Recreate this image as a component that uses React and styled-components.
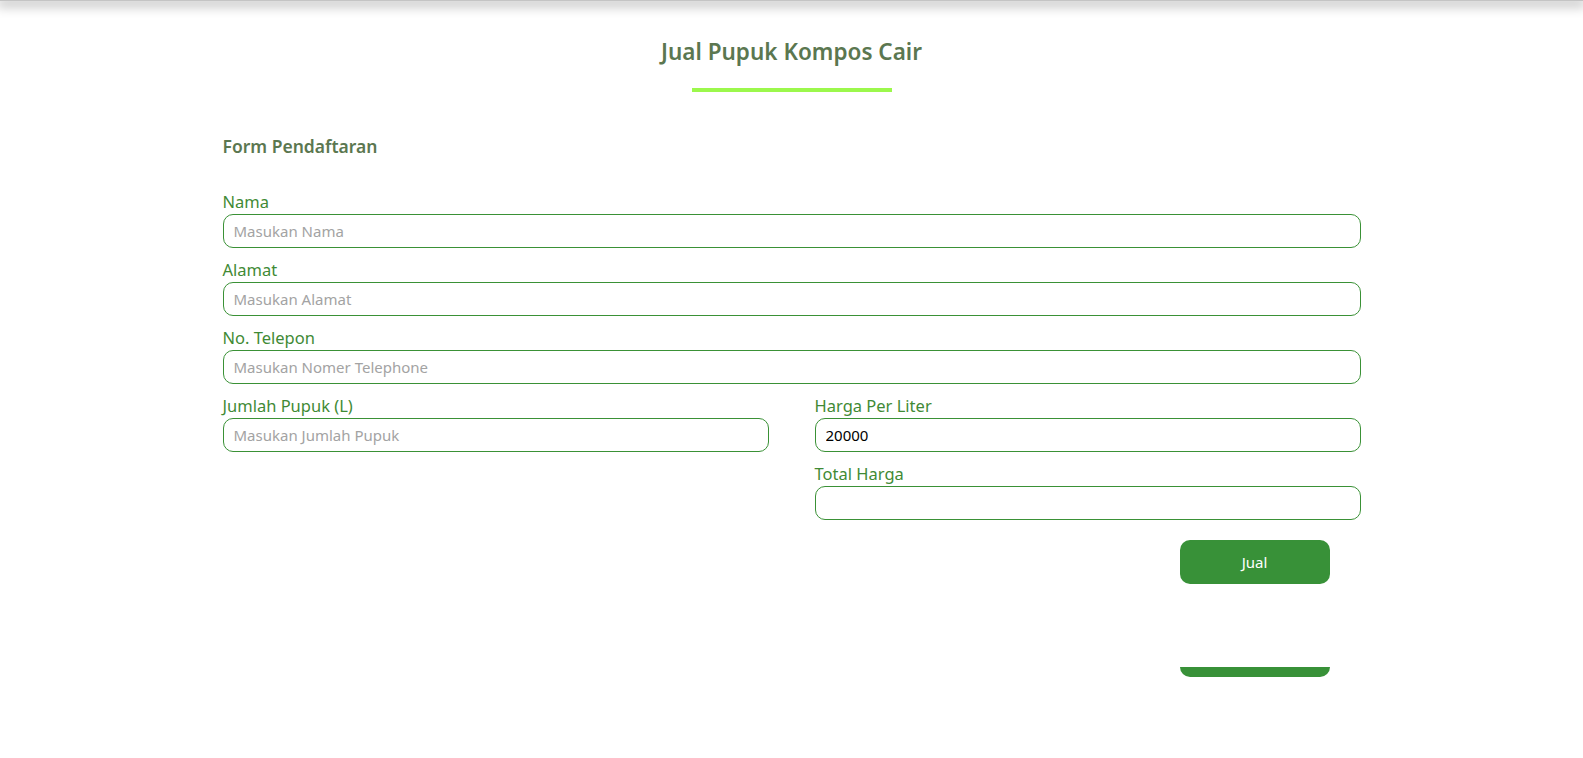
import React from 'react';
import styled, { createGlobalStyle } from 'styled-components';

const GlobalStyle = createGlobalStyle`
  body {
    margin: 0;
    background: #ffffff;
    font-family: "Noto Sans", "Open Sans", sans-serif;
  }
  * { box-sizing: border-box; }
`;

const TopShade = styled.div`
  height: 1px;
  background: #c4c4c4;
  box-shadow: 0 2px 12px 3px rgba(0, 0, 0, 0.3);
`;

const Page = styled.main`
  width: 1138px;
  margin: 0 auto;
  padding-top: 34px;
`;

const Title = styled.h1`
  margin: 0;
  text-align: center;
  font-size: 22.5px;
  line-height: 34px;
  font-weight: 600;
  color: #5b7750;
`;

const Underline = styled.div`
  width: 200px;
  height: 4px;
  margin: 19px auto 0;
  background: #9cf84c;
`;

const FormTitle = styled.h2`
  margin: 40px 0 0;
  font-size: 17.5px;
  line-height: 28px;
  font-weight: 600;
  color: #5b7750;
`;

const Form = styled.form`
  margin-top: 30px;
`;

const Field = styled.div`
  margin-bottom: 10px;
`;

const Label = styled.label`
  display: block;
  font-size: 16.5px;
  line-height: 24px;
  color: #3f8a35;
`;

const Input = styled.input`
  display: block;
  width: 100%;
  height: 34px;
  border: 1px solid #3a9136;
  border-radius: 10px;
  padding: 0 10px;
  font-family: inherit;
  font-size: 15px;
  color: #000;
  outline: none;
  &::placeholder {
    color: #a3a3a3;
  }
`;

const Columns = styled.div`
  display: grid;
  grid-template-columns: 1fr 1fr;
  column-gap: 46px;
`;

const Actions = styled.div`
  display: flex;
  flex-direction: column;
  align-items: flex-end;
  padding-right: 31px;
  margin-top: 10px;
`;

const Button = styled.button`
  width: 150px;
  height: 44px;
  border: none;
  border-radius: 10px;
  background: #389138;
  color: #ffffff;
  font-family: inherit;
  font-size: 15px;
  cursor: pointer;
`;

const ClippedButton = styled.div`
  width: 150px;
  height: 10px;
  margin-top: 83px;
  background: #389138;
  border-radius: 0 0 10px 10px;
`;

const fields = [
  { label: 'Nama', placeholder: 'Masukan Nama' },
  { label: 'Alamat', placeholder: 'Masukan Alamat' },
  { label: 'No. Telepon', placeholder: 'Masukan Nomer Telephone' },
];

export default function App() {
  return (
    <>
      <GlobalStyle />
      <TopShade />
      <Page>
        <Title>Jual Pupuk Kompos Cair</Title>
        <Underline />
        <FormTitle>Form Pendaftaran</FormTitle>
        <Form onSubmit={(e) => e.preventDefault()}>
          {fields.map((f) => (
            <Field key={f.label}>
              <Label>{f.label}</Label>
              <Input placeholder={f.placeholder} />
            </Field>
          ))}
          <Columns>
            <div>
              <Field>
                <Label>Jumlah Pupuk (L)</Label>
                <Input placeholder="Masukan Jumlah Pupuk" />
              </Field>
            </div>
            <div>
              <Field>
                <Label>Harga Per Liter</Label>
                <Input defaultValue="20000" readOnly />
              </Field>
              <Field>
                <Label>Total Harga</Label>
                <Input readOnly />
              </Field>
            </div>
          </Columns>
          <Actions>
            <Button type="submit">Jual</Button>
            <ClippedButton />
          </Actions>
        </Form>
      </Page>
    </>
  );
}
